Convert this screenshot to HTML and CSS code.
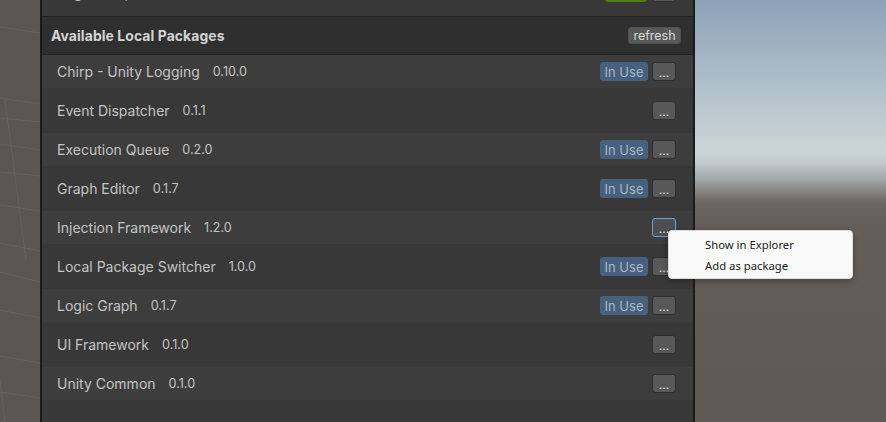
FILE: index.html
```html
<!DOCTYPE html>
<html>
<head>
<meta charset="utf-8">
<link rel="stylesheet" href="styles.css">
</head>
<body>
<div class="app">
  <div class="scene-left">
    <svg width="40" height="422" viewBox="0 0 40 422">
      <g stroke="#66615c" stroke-width="1" fill="none">
        <line x1="0" y1="27" x2="40" y2="33"/>
        <line x1="0" y1="98" x2="40" y2="104"/>
        <line x1="0" y1="118" x2="40" y2="122"/>
        <line x1="0" y1="144" x2="40" y2="150"/>
        <line x1="0" y1="172" x2="40" y2="176"/>
        <line x1="0" y1="205" x2="40" y2="211"/>
        <line x1="0" y1="243" x2="40" y2="251"/>
        <line x1="0" y1="272" x2="40" y2="282"/>
        <line x1="0" y1="310" x2="40" y2="318"/>
        <line x1="0" y1="356" x2="40" y2="363"/>
        <line x1="0" y1="392" x2="40" y2="398"/>
        <line x1="5" y1="100" x2="26" y2="260"/>
        <line x1="0" y1="380" x2="5" y2="422"/>
      </g>
    </svg>
  </div>

  <div class="panel">
    <div class="top-section">
      <div class="row top-row">
        <span class="name">Page Setup</span>
        <span class="spacer"></span>
        <span class="btn-green"></span>
        <span class="btn btn-more">...</span>
      </div>
    </div>

    <div class="section-header">
      <span class="section-title">Available Local Packages</span>
      <span class="btn btn-refresh">refresh</span>
    </div>

    <div class="list">
      <div class="row"><span class="name">Chirp - Unity Logging</span><span class="version">0.10.0</span><span class="spacer"></span><span class="badge">In Use</span><span class="btn btn-more">...</span></div>
      <div class="row"><span class="name">Event Dispatcher</span><span class="version">0.1.1</span><span class="spacer"></span><span class="btn btn-more">...</span></div>
      <div class="row"><span class="name">Execution Queue</span><span class="version">0.2.0</span><span class="spacer"></span><span class="badge">In Use</span><span class="btn btn-more">...</span></div>
      <div class="row"><span class="name">Graph Editor</span><span class="version">0.1.7</span><span class="spacer"></span><span class="badge">In Use</span><span class="btn btn-more">...</span></div>
      <div class="row"><span class="name">Injection Framework</span><span class="version">1.2.0</span><span class="spacer"></span><span class="btn btn-more focused">...</span></div>
      <div class="row"><span class="name">Local Package Switcher</span><span class="version">1.0.0</span><span class="spacer"></span><span class="badge">In Use</span><span class="btn btn-more">...</span></div>
      <div class="row"><span class="name">Logic Graph</span><span class="version">0.1.7</span><span class="spacer"></span><span class="badge">In Use</span><span class="btn btn-more">...</span></div>
      <div class="row"><span class="name">UI Framework</span><span class="version">0.1.0</span><span class="spacer"></span><span class="btn btn-more">...</span></div>
      <div class="row"><span class="name">Unity Common</span><span class="version">0.1.0</span><span class="spacer"></span><span class="btn btn-more">...</span></div>
    </div>
  </div>

  <div class="scene-right"></div>

  <div class="context-menu">
    <div class="menu-item">Show in Explorer</div>
    <div class="menu-item">Add as package</div>
  </div>
</div>
</body>
</html>
```

FILE: styles.css
```css
* { box-sizing: border-box; }

html, body {
  margin: 0;
  padding: 0;
  width: 886px;
  height: 422px;
  overflow: hidden;
  background: #5b5651;
}

.app {
  position: relative;
  display: flex;
  width: 886px;
  height: 422px;
  font-family: Inter, "Noto Sans", sans-serif;
}

.scene-left {
  width: 40px;
  flex: none;
  background: #5b5651;
}
.scene-left svg { display: block; }

.panel {
  width: 655px;
  flex: none;
  background: #383838;
  border-left: 2px solid #1b1b1b;
  border-right: 2px solid #1b1b1b;
  display: flex;
  flex-direction: column;
}

.scene-right {
  flex: 1;
  background: linear-gradient(to bottom,
    #8da2b7 0px,
    #a6b7c5 60px,
    #bac8cf 110px,
    #cbd4d5 150px,
    #c4cccd 162px,
    #a5abac 178px,
    #84827f 192px,
    #6a6561 203px,
    #635e5a 225px,
    #5e5955 422px);
}

/* top (cut-off) section */
.top-section {
  height: 17px;
  overflow: hidden;
  border-bottom: 1px solid #222222;
  display: flex;
  flex-direction: column;
  justify-content: flex-end;
  padding-bottom: 14px;
}
.top-section .row.top-row {
  height: 19px;
  flex: none;
  background: transparent;
  margin: 0;
}
.btn-green {
  width: 42px;
  height: 19px;
  background: #517b15;
  border-radius: 3px;
  margin-right: 5px;
  margin-left: 5px;
}

/* header */
.section-header {
  height: 38px;
  background: #2f2f2f;
  border-bottom: 1px solid #222222;
  display: flex;
  align-items: center;
  padding: 0 12px 0 9px;
}
.section-title {
  flex: 1;
  color: #d4d4d4;
  font-weight: 700;
  font-size: 13.9px;
  letter-spacing: 0.1px;
}

/* list */
.list {
  display: flex;
  flex-direction: column;
  gap: 6px;
}

.row {
  height: 33px;
  display: flex;
  align-items: center;
  padding: 0 17px 0 15px;
  color: #c4c4c4;
}
.list .row:nth-child(odd) { background: #3d3d3d; }

.name { font-size: 14px; }
.version { font-size: 12.6px; margin-left: 13px; }
.spacer { flex: 1; }

.btn {
  display: flex;
  align-items: center;
  justify-content: center;
  background: #585858;
  border: 1px solid #2e2e2e;
  border-radius: 3px;
  color: #e4e4e4;
  font-size: 12px;
}
.btn-more {
  width: 24px;
  height: 19px;
  line-height: 1;
  padding-top: 3px;
}
.btn-more.focused {
  border-color: #6c9ce4;
  background: #4e4e4e;
}
.btn-refresh {
  width: 53px;
  height: 17px;
  font-size: 12.5px;
  color: #dadada;
  border-color: #505050;
}

.badge {
  width: 48px;
  height: 19px;
  display: flex;
  align-items: center;
  justify-content: center;
  background: #46607d;
  border-radius: 3px;
  color: #a9b7c6;
  font-size: 13px;
  margin-right: 4px;
}

/* context menu */
.context-menu {
  position: absolute;
  left: 668px;
  top: 230px;
  width: 185px;
  height: 49px;
  background: #f9f9f9;
  border: 1px solid #dcdcdc;
  border-radius: 4px;
  box-shadow: 0 2px 6px rgba(0, 0, 0, 0.3);
  padding-top: 3px;
}
.menu-item {
  height: 21px;
  line-height: 21px;
  padding-left: 36px;
  font-family: "Noto Sans", "Open Sans", sans-serif;
  font-size: 11.3px;
  color: #1a1a1a;
}
```
